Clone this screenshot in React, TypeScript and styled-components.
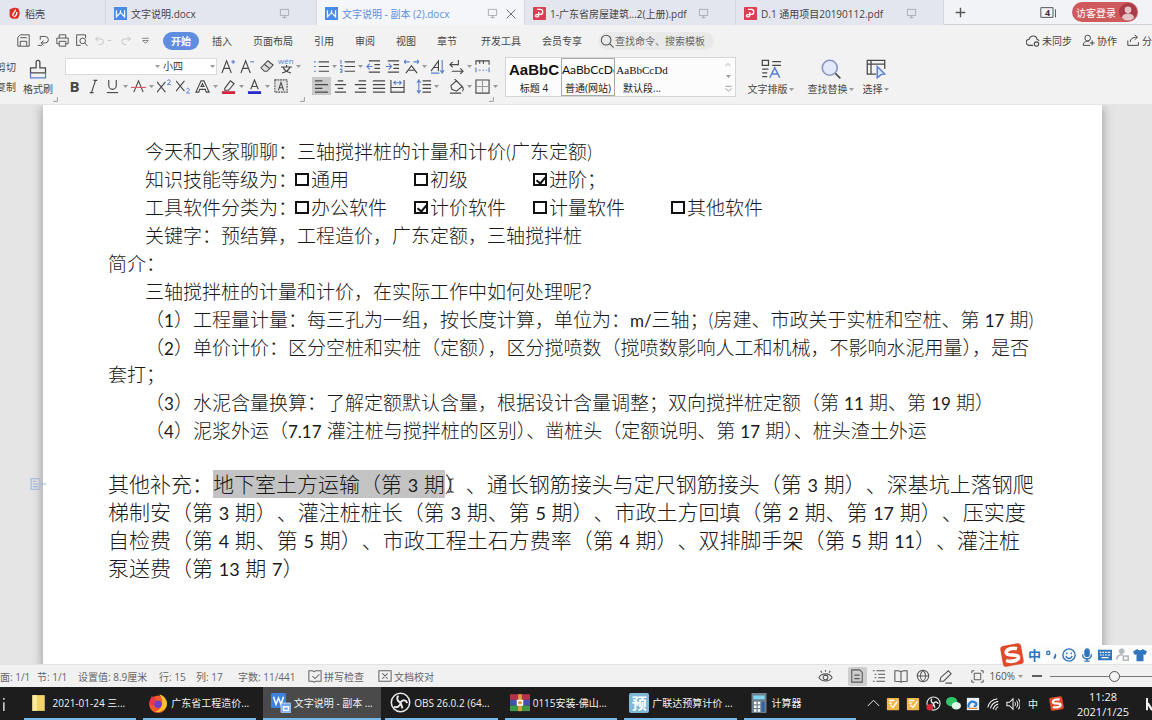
import React from "react";
import styled, { createGlobalStyle } from "styled-components";

const UI = `"Open Sans", "Noto Sans CJK SC", sans-serif`;

const Global = createGlobalStyle`
  * { box-sizing: border-box; }
  body { margin: 0; background: #f2f2f2; font-family: ${UI}; font-size: 10px; color: #484848; }
  button { font: inherit; color: inherit; background: none; border: 0; padding: 0; margin: 0; }
  svg { display: block; flex: none; }
`;

const Shell = styled.div`
  min-height: 100vh;
  display: flex;
  flex-direction: column;
  overflow: hidden;
  white-space: nowrap;
`;

/* ---------- tab strip ---------- */
const TabStrip = styled.header`
  display: flex;
  height: 25px;
  border-bottom: 1px solid #cfd1d8;
  background: #f2f3f6;
`;
const Tab = styled.button<{ $w: number; $active?: boolean }>`
  width: ${(p) => p.$w}px;
  height: 25px;
  display: flex;
  align-items: center;
  gap: 4px;
  padding: 2px 8px 0;
  border-right: 1px solid #d6d8e0;
  background: ${(p) => (p.$active ? "#f5f6fa" : "#e4e6ef")};
  color: ${(p) => (p.$active ? "#5b8de0" : "#444")};
`;
const TabTail = styled.span`
  margin-left: auto;
  display: flex;
  align-items: center;
  gap: 8px;
  padding-right: 18px;
`;
const TabTailTight = styled(TabTail)`
  padding-right: 0;
`;
const NewTab = styled.button`
  width: 32px;
  display: grid;
  place-items: center;
`;
const StripRight = styled.div`
  margin-left: auto;
  display: flex;
  align-items: center;
  gap: 14px;
  padding-right: 14px;
`;
const Login = styled.button`
  display: flex;
  align-items: center;
  justify-content: space-between;
  width: 66px;
  height: 20px;
  padding: 0 1px 0 4px;
  border-radius: 10px;
  background: #cf5a5c;
  color: #fff;
`;

/* ---------- menu ---------- */
const MenuRow = styled.nav`
  display: flex;
  align-items: center;
  height: 31px;
  padding-right: 2px;
`;
const QuickTools = styled.div`
  display: flex;
  align-items: center;
  padding-left: 13px;
  width: 163px;
`;
const Quick = styled.button<{ $dim?: boolean; $w?: number }>`
  width: ${(p) => p.$w ?? 20}px;
  height: 18px;
  display: grid;
  place-items: center;
  color: ${(p) => (p.$dim ? "#c2c2c2" : "#555")};
`;
const MenuGroup = styled.div<{ $gap: number; $after: number }>`
  display: flex;
  align-items: center;
  gap: ${(p) => p.$gap}px;
  margin-right: ${(p) => p.$after}px;
`;
const MenuItem = styled.button`
  height: 18px;
`;
const ActiveItem = styled(MenuItem)`
  width: 36px;
  margin-right: -8px;
  border-radius: 9px;
  background: #5f8ee0;
  color: #fff;
  font-weight: 700;
`;
const Search = styled.label`
  display: flex;
  align-items: center;
  gap: 1px;
  width: 116px;
  height: 18px;
  padding-left: 2px;
  border-radius: 9px;
  background: #e9e9ea;
  color: #555;
`;
const SearchInput = styled.input`
  flex: 1;
  min-width: 0;
  padding: 0;
  border: 0;
  outline: 0;
  background: none;
  font: inherit;
  &::placeholder { color: #666; opacity: 1; }
`;
const MenuRight = styled.div`
  margin-left: auto;
  display: flex;
  gap: 10px;
  margin-right: -12px;
`;
const IconText = styled.button`
  display: flex;
  align-items: center;
  gap: 2px;
`;

/* ---------- ribbon ---------- */
const Ribbon = styled.section`
  display: flex;
  height: 49px;
  border-bottom: 1px solid #e4e4e4;
`;
const Clipboard = styled.div`
  display: flex;
  flex-wrap: wrap;
  align-content: flex-start;
  width: 65px;
`;
const CutCopy = styled.div`
  width: 16px;
  height: 40px;
  display: flex;
  flex-direction: column;
  align-items: flex-end;
  overflow: hidden;
  button { height: 20px; }
`;
const Rows = styled.div<{ $w: number }>`
  width: ${(p) => p.$w}px;
`;
const Row = styled.div`
  display: flex;
  align-items: center;
  height: 20px;
`;
const LauncherRow = styled.div`
  width: 100%;
  display: flex;
  justify-content: flex-end;
  padding: 1px 7px 0 0;
  color: #999;
`;
const Cell = styled.button<{ $on?: boolean }>`
  display: flex;
  align-items: center;
  height: 18px;
  background: ${(p) => (p.$on ? "#c9c9c9" : "none")};
`;
const CellIcon = styled.span`
  width: 19px;
  display: grid;
  place-items: center;
`;
const CaretBox = styled.span`
  width: 7px;
  display: grid;
  place-items: center;
`;
const Spacer = styled.span<{ $w: number }>`
  width: ${(p) => p.$w}px;
`;
const Combo = styled.div`
  display: flex;
  width: 152px;
  height: 17px;
  border: 1px solid #dadada;
  background: #fff;
`;
const ComboSelect = styled.select<{ $w: number }>`
  appearance: none;
  width: ${(p) => p.$w}px;
  border: 0;
  padding: 0 2px;
  background: none;
  font: inherit;
  color: #333;
`;
const BoldGlyph = styled.b`
  font-size: 15px;
  line-height: 14px;
`;
const Gallery = styled.div`
  display: flex;
  width: 231px;
  height: 40px;
  margin: 1px 0 0 4px;
  padding: 0 1px;
  border: 1px solid #d6d6d6;
  background: #fcfcfc;
`;
const StyleCard = styled.button<{ $on?: boolean }>`
  width: 54px;
  overflow: hidden;
  border: 1px solid ${(p) => (p.$on ? "#a8a8a8" : "transparent")};
  color: #222;
  display: flex;
  flex-direction: column;
`;
const Sample = styled.span<{ $font: string; $size: number; $bold?: boolean }>`
  height: 22px;
  line-height: 22px;
  font-family: ${(p) => p.$font};
  font-size: ${(p) => p.$size}px;
  font-weight: ${(p) => (p.$bold ? 700 : 400)};
  color: #111;
`;
const CardName = styled.span`
  width: 100%;
  line-height: 14px;
  text-align: center;
`;
const GalleryScroll = styled.div`
  margin-left: auto;
  width: 12px;
  display: flex;
  flex-direction: column;
  align-items: center;
  justify-content: space-around;
`;
const BigButton = styled.button<{ $w: number }>`
  width: ${(p) => p.$w}px;
  height: 40px;
  display: flex;
  flex-direction: column;
  align-items: center;
  justify-content: space-between;
  padding-top: 3px;
  line-height: 14px;
`;
const BigTools = styled.div`
  display: flex;
  padding: 0 5px;
`;
const LabelRow = styled.span`
  display: flex;
  align-items: center;
`;

/* ---------- document ---------- */
const Desk = styled.main`
  flex: 1;
  display: flex;
  padding: 0 50px 0 43px;
  background: #e5e5e6;
`;
const Page = styled.article`
  position: relative;
  flex: 1;
  min-width: 0;
  padding: 33px 36px 0 65px;
  background: #fff;
  box-shadow: 0 4px 9px 2px #a9a9a9;
  clip-path: inset(0 -24px 0 -24px);
  color: #1a1a1a;
  font-family: Lato, "Noto Sans CJK SC", sans-serif;
  font-size: 19px;
  font-weight: 300;
`;
const Para = styled.p<{ $indent?: boolean }>`
  margin: 0 0 1px;
  line-height: 27px;
  padding-left: ${(p) => (p.$indent ? 37 : 0)}px;
`;
const Item = styled.p`
  margin: 0 0 1px;
  line-height: 27px;
  text-indent: 37px;
`;
const Extra = styled.p`
  margin: 26px 0 0;
  font-size: 21px;
  line-height: 28px;
  text-spacing-trim: space-all;
`;
const Latin = styled.span<{ $big?: boolean }>`
  font-size: ${(p) => (p.$big ? 18 : 17)}px;
  font-weight: 400;
  line-height: 1;
`;
const Selected = styled.mark`
  display: inline-block;
  background: #c3c3c3;
  color: inherit;
`;
const Choices = styled.fieldset`
  display: grid;
  grid-template-columns: 149px 119px 119px 138px auto;
  justify-content: start;
  margin: 0 0 1px;
  padding: 0 0 0 37px;
  border: 0;
  line-height: 27px;
`;
const Choice = styled.label`
  display: flex;
  align-items: center;
  gap: 2px;
  padding-left: 1px;
`;
const Tick = styled.input`
  appearance: none;
  position: relative;
  width: 14px;
  height: 13px;
  margin: 0;
  border: 2px solid #111;
  &:checked::after {
    content: "";
    position: absolute;
    left: 3px;
    top: 0;
    width: 4px;
    height: 7px;
    border: solid #111;
    border-width: 0 2px 2px 0;
    transform: rotate(40deg);
  }
`;
const MarginMark = styled.span`
  position: absolute;
  left: -18px;
  top: 372px;
`;
const IBeam = styled.span`
  position: absolute;
  left: 404px;
  top: 373px;
`;

/* ---------- status bar ---------- */
const Status = styled.footer`
  display: flex;
  align-items: center;
  height: 23px;
  overflow: hidden;
  background: #f1f1f1;
  border-top: 1px solid #e2e2e2;
  color: #666;
`;
const StatusText = styled.span<{ $w: number }>`
  width: ${(p) => p.$w}px;
`;
const StatusButton = styled(IconText)`
  width: 70px;
`;
const StatusRight = styled.div`
  margin-left: auto;
  display: flex;
  align-items: center;
  color: #555;
`;
const ViewButton = styled.button<{ $on?: boolean }>`
  width: 19px;
  height: 19px;
  margin-right: 3px;
  display: grid;
  place-items: center;
  border-radius: 2px;
  background: ${(p) => (p.$on ? "#cdcdcd" : "none")};
`;
const Zoom = styled.input`
  appearance: none;
  width: 128px;
  height: 12px;
  margin: 0 -26px 0 8px;
  background: linear-gradient(#777, #777) center / 100% 1px no-repeat;
  &::-webkit-slider-thumb {
    appearance: none;
    width: 11px;
    height: 11px;
    border: 1px solid #555;
    border-radius: 50%;
    background: #f4f4f4;
  }
`;

/* ---------- input method bar ---------- */
const Ime = styled.aside`
  position: absolute;
  right: 0;
  bottom: 23px;
  display: flex;
  align-items: center;
  gap: 4px;
  width: 152px;
  height: 19px;
  background: #fcfcfd;
  color: #2f74bd;
`;
const ImeMode = styled.b`
  font-size: 13px;
  line-height: 18px;
`;
const Anchor = styled.div`
  position: relative;
  display: flex;
  flex-direction: column;
  flex: 1;
`;

/* ---------- taskbar ---------- */
const Taskbar = styled.footer`
  display: flex;
  height: 33px;
  overflow: hidden;
  background: #1d1d1d;
  color: #f2f2f2;
`;
const TaskEdge = styled.span`
  width: 24px;
  display: flex;
  align-items: center;
  padding-left: 3px;
`;
const Task = styled.button<{ $on?: boolean }>`
  width: ${(p) => (p.$on ? 119 : 113)}px;
  margin-right: ${(p) => (p.$on ? 4 : 7)}px;
  display: flex;
  align-items: center;
  gap: 3px;
  padding-left: ${(p) => (p.$on ? 8 : 5)}px;
  border-bottom: 2px solid #76b9ed;
  background: ${(p) => (p.$on ? "#4a4a4a" : "none")};
`;
const Tray = styled.div`
  margin-left: auto;
  display: flex;
  align-items: center;
`;
const TrayIcon = styled.button`
  width: 20px;
  display: grid;
  place-items: center;
`;
const Clock = styled.time`
  width: 74px;
  text-align: center;
  font-size: 11px;
  line-height: 15px;
`;
const Badge = styled.span`
  display: grid;
  place-items: center;
  width: 20px;
  height: 20px;
  border-radius: 2px;
  background: #7fb9d6;
  color: #fff;
  font-size: 15px;
  font-weight: 700;
  line-height: 18px;
`;

/* ---------- drawings ---------- */
type IcoProps = { s?: number; w?: number; children: React.ReactNode; sw?: number };
const Ico = ({ s = 15, w, children, sw = 1.2 }: IcoProps) => (
  <svg width={w ?? s} height={s} viewBox={`0 0 ${w ? (16 * w) / s : 16} 16`} fill="none" stroke="currentColor" strokeWidth={sw} aria-hidden="true">
    {children}
  </svg>
);
const BLUE = "#5b7fd0";
const Caret = () => (
  <svg width="5" height="3" viewBox="0 0 5 3" aria-hidden="true"><path d="M0 0h5L2.500 3z" fill="#999" /></svg>
);
const Launcher = () => (
  <LauncherRow><Ico s={5}><path d="M14 0v14H0" strokeWidth="3" /></Ico></LauncherRow>
);
const Writer = () => (
  <Ico s={13}><rect width="16" height="16" fill="#4a8ae8" stroke="none" /><path d="M3 4v8l5-5 5 5V4M8 4v3" stroke="#fff" strokeWidth="1.5" /></Ico>
);
const Pdf = () => (
  <Ico s={13}><rect width="16" height="16" rx="1" fill="#dc3f55" stroke="none" /><path d="M5 3h4a3 3 0 0 1 0 6H7c-3 0-4 1-4 2s3 2 4 0V6" stroke="#fff" strokeWidth="1.6" /></Ico>
);
const Monitor = () => (
  <Ico s={11}><path d="M2 2h12v9H2zM8 11v4M5 14h6" stroke="#aaacb4" strokeWidth="1.4" /></Ico>
);
const SogouS = ({ s }: { s: number }) => (
  <Ico s={s}>
    <g transform="rotate(-10 8 8)">
      <rect x="1" y="1" width="14" height="14" rx="2" fill="#df4b2b" stroke="none" />
      <path d="M12 4.500C9 3 4.500 3.500 4.500 6S12 7.500 12 10s-5 2.800-8.500 1" stroke="#fff" strokeWidth="2.400" />
    </g>
  </Ico>
);
const Obs = ({ s, dot }: { s: number; dot?: boolean }) => (
  <Ico s={s}>
    <circle cx="8" cy="8" r="7" fill="#181818" stroke="#e8e8e8" />
    <path d="M8 8C5 7 5 4 6.500 3M8 8c1.500-2.500 4.500-2 5 .5M8 8c0 3-3 4.500-5 3M8 8l1.500 4.500" stroke="#e8e8e8" strokeWidth="1.500" />
    {dot && <circle cx="4" cy="12" r="3.500" fill="#d62a35" stroke="none" />}
  </Ico>
);
const YellowNote = () => (
  <Ico s={14}><rect x="1" y="1" width="14" height="14" rx="1" fill="#efb84a" stroke="none" /><path d="M3.500 4h6M3.500 7h3M5 9l3 3 5-7" stroke="#fff" strokeWidth="1.600" /></Ico>
);

const lines = (xs: [number, number, number][], stroke?: string) => (
  <path d={xs.map(([x, y, l]) => `M${x} ${y}h${l}`).join("")} stroke={stroke} />
);

const Tool = ({ name, caret, on, children }: { name: string; caret?: boolean; on?: boolean; children: React.ReactNode }) => (
  <Cell $on={on} aria-label={name}>
    <CellIcon>{children}</CellIcon>
    {caret && <CaretBox><Caret /></CaretBox>}
  </Cell>
);

/* Sets digits and Latin runs slightly smaller than the Chinese around them. */
const Mixed = ({ t, big }: { t: string; big?: boolean }) => (
  <>
    {t.split(/([0-9a-z./]+)/).map((part, i) => (i % 2 ? <Latin key={i} $big={big}>{part}</Latin> : part))}
  </>
);

const Option = ({ label, checked }: { label: string; checked?: boolean }) => (
  <Choice><Tick type="checkbox" defaultChecked={checked} />{label}</Choice>
);

function ImeBar() {
  return (
    <Ime aria-label="输入法工具栏">
      <SogouS s={24} />
      <ImeMode>中</ImeMode>
      <Ico s={13}><circle cx="4" cy="6" r="2" strokeWidth="1.600" /><path d="M12 8c1 0 1 3-1 5" strokeWidth="2.500" /></Ico>
      <Ico s={14}><circle cx="8" cy="8" r="7" strokeWidth="1.600" /><path d="M4.500 9c1 4 6 4 7 0M5.500 5v2M10.500 5v2" strokeWidth="1.500" /></Ico>
      <Ico s={14}><rect x="5.500" y="1" width="5" height="9" rx="2.500" fill="currentColor" /><path d="M3 7c0 7 10 7 10 0M8 12v3M5 15h6" strokeWidth="1.500" /></Ico>
      <Ico s={14}><path d="M0 2h16v12H0z" fill="currentColor" stroke="none" /><path d="M2 5h2M5 5h2M8 5h2M11 5h3M2 8h2M5 8h2M8 8h2M11 8h3M4 11h8" stroke="#fff" /></Ico>
      <Ico s={13}><g stroke="#b4b8c0"><circle cx="7" cy="4" r="3" fill="#b4b8c0" /><path d="M1 14c0-6 6-6 7-5M9 10h6v5H9z" strokeWidth="2" /></g></Ico>
      <Ico s={14}><path d="M5 1L0 4l2 4 2-1v8h8V7l2 1 2-4-5-3c-1 2-5 2-6 0z" fill="currentColor" stroke="none" /></Ico>
    </Ime>
  );
}

export default function App() {
  return (
    <Shell>
      <Global />
      <TabStrip>
        <Tab $w={106}>
          <Ico s={13}><path d="M2 3c4-2 8-3 11-1 2 4 2 8-1 12-4 1-7 1-10-2z" fill="#dc2f22" stroke="none" /><path d="M9 3c1 3-4 4-3 8M11 6c0 3-1 5-4 6" stroke="#fff" strokeWidth="1.600" /></Ico>
          稻壳
        </Tab>
        <Tab $w={211}><Writer />文字说明.docx<TabTail><Monitor /></TabTail></Tab>
        <Tab $w={208} $active>
          <Writer />文字说明 - 副本 (2).docx
          <TabTailTight><Monitor /><Ico s={10}><path d="M1 1l14 14M15 1L1 15" stroke="#666" strokeWidth="1.500" /></Ico></TabTailTight>
        </Tab>
        <Tab $w={211}><Pdf />1-广东省房屋建筑...2(上册).pdf<TabTail><Monitor /></TabTail></Tab>
        <Tab $w={208}><Pdf />D.1 通用项目20190112.pdf<TabTail><Monitor /></TabTail></Tab>
        <NewTab aria-label="新建"><Ico s={11}><path d="M8 1v14M1 8h14" stroke="#555" strokeWidth="2" /></Ico></NewTab>
        <StripRight>
          <Ico s={13} w={18}><path d="M1 2h15v12H1zM19 4v10" stroke="#555" /><text x="6" y="12" fontSize="11" fontWeight="700" fill="#333" stroke="none">4</text></Ico>
          <Login>访客登录<Ico s={18}><circle cx="8" cy="8" r="8" fill="#a83c48" stroke="none" /><circle cx="8" cy="6" r="3" fill="#e6c3c6" stroke="none" /><path d="M2.500 13c1-5 10-5 11 0-3 3.500-8 3.500-11 0z" fill="#e6c3c6" stroke="none" /></Ico></Login>
        </StripRight>
      </TabStrip>

      <MenuRow>
        <QuickTools>
          <Quick aria-label="保存"><Ico s={13}><path d="M1 15V4l3-3h11v14zM4 15V9h8v6M4 4.500h8" /></Ico></Quick>
          <Quick aria-label="导出"><Ico s={13}><path d="M4 3h6a4 4 0 0 1 0 8H5M4 3v4M8 8l-3 3 3 3M1 14h5" /></Ico></Quick>
          <Quick aria-label="打印" $w={18}><Ico s={13}><path d="M4 5V1h8v4M4 12H1V5h14v7h-3M4 9h8v6H4z" /></Ico></Quick>
          <Quick aria-label="预览"><Ico s={13}><path d="M7 14H2V1h11v4" /><circle cx="9.500" cy="8.500" r="3.500" /><path d="M12 11l3.500 4" /></Ico></Quick>
          <Quick aria-label="撤销" $dim $w={24}><Ico s={13} w={18}><path d="M5 3L2 6l3 3M2 6h6a3.500 3.500 0 0 1 0 7H6M17 8h4" /></Ico></Quick>
          <Quick aria-label="恢复" $dim><Ico s={13}><path d="M11 3l3 3-3 3M14 6H7a3.500 3.500 0 0 0 0 7h2" /></Ico></Quick>
          <Quick aria-label="更多"><Ico s={9}><path d="M2 4h12M3 8l5 5 5-5z" /></Ico></Quick>
        </QuickTools>
        <MenuGroup $gap={21} $after={24}>
          <ActiveItem>开始</ActiveItem>
          {["插入", "页面布局", "引用", "审阅", "视图", "章节"].map((m) => <MenuItem key={m}>{m}</MenuItem>)}
        </MenuGroup>
        <MenuGroup $gap={21} $after={16}>
          <MenuItem>开发工具</MenuItem>
          <MenuItem>会员专享</MenuItem>
        </MenuGroup>
        <Search>
          <Ico s={14}><circle cx="7" cy="7" r="5.500" /><path d="M11 11l4.500 4.500" /></Ico>
          <SearchInput aria-label="查找命令" placeholder="查找命令、搜索模板" />
        </Search>
        <MenuRight>
          <IconText><Ico s={14}><path d="M8 13H4a3.500 3.500 0 0 1-.5-7C5 1 12 1 12.500 6A3.500 3.500 0 0 1 15 8" /><circle cx="12" cy="11.500" r="2.500" /></Ico>未同步</IconText>
          <IconText><Ico s={13}><circle cx="7" cy="5" r="3.500" /><path d="M1.500 14c0-5 5-5.500 7-4.500M1.500 14H10M12.500 8v6M9.500 11h6" /></Ico>协作</IconText>
          <IconText><Ico s={13}><path d="M1 8v6h13v-4M4 10c0-4 3-6 8-6M9.500 1l3.500 3-3.500 3" /></Ico>分享</IconText>
        </MenuRight>
      </MenuRow>

      <Ribbon>
        <Clipboard>
          <CutCopy><button>剪切</button><button>复制</button></CutCopy>
          <BigButton $w={44}>
            <Ico s={20}><path d="M6.500 7V2.500a1.500 1.500 0 0 1 3 0V7H14v4H2V7z" strokeWidth="1" /><path d="M2 11v4h12v-4" stroke={BLUE} strokeWidth="1" /></Ico>
            格式刷
          </BigButton>
          <Launcher />
        </Clipboard>
        <Rows $w={247}>
          <Row>
            <Combo>
              <ComboSelect $w={88} aria-label="字体"><option> </option></ComboSelect>
              <CaretBox><Caret /></CaretBox>
              <ComboSelect $w={48} aria-label="字号"><option>小四</option></ComboSelect>
              <CaretBox><Caret /></CaretBox>
            </Combo>
            <Spacer $w={2} />
            <Tool name="增大字号"><Ico><path d="M1 15L6 2l5 13M3 10h6" /><path d="M11 3h4M13 1v4" stroke={BLUE} /></Ico></Tool>
            <Tool name="减小字号"><Ico><path d="M1 15L6 2l5 13M3 10h6" /><path d="M11 3h4" stroke={BLUE} /></Ico></Tool>
            <Tool name="清除格式"><Ico s={14}><path d="M1 10l8-8 6 5-7 7H5z" fill="#dcdcdc" /><path d="M5 6l6 5" /></Ico></Tool>
            <Tool name="拼音" caret><Ico s={16}><text x="0" y="6" fontSize="8" fill={BLUE} stroke="none">wén</text><path d="M3 9h11M8.500 7v2M5 9c1 3 4 5 8 6M12 9c-1 3-4 5-8 6" /></Ico></Tool>
          </Row>
          <Row>
            <Tool name="加粗"><BoldGlyph>B</BoldGlyph></Tool>
            <Tool name="倾斜"><Ico><path d="M6 14L10 2M4 14.500h4M8 1.500h4" /></Ico></Tool>
            <Tool name="下划线" caret><Ico><path d="M4 1v6a4 4 0 0 0 8 0V1" /><path d="M2 14.500h12" /></Ico></Tool>
            <Tool name="删除线" caret><Ico><path d="M3 14L8 2l5 12" /><path d="M0 9h16" stroke="#e0566a" /></Ico></Tool>
            <Tool name="上标"><Ico><path d="M0 3l9 11M9 3L0 14" /><path d="M11 2c1-2 4-1 3 1l-3 3h4" stroke={BLUE} strokeWidth="1" /></Ico></Tool>
            <Tool name="下标"><Ico><path d="M0 2l9 11M9 2L0 13" /><path d="M11 11c1-2 4-1 3 1l-3 3h4" stroke={BLUE} strokeWidth="1" /></Ico></Tool>
            <Tool name="文字效果" caret><Ico><path d="M1 14L6.500 2h3L15 14h-3l-1-3H5l-1 3zM6.500 8h3L8 5z" /></Ico></Tool>
            <Tool name="突出显示" caret><Ico><path d="M4 10l6-8 4 3-6 7H4z" /><path d="M1 14.500h14" stroke="#d8203c" strokeWidth="3" /></Ico></Tool>
            <Tool name="字体颜色" caret><Ico><path d="M4 11L8 1l4 10M5.500 8h5" /><path d="M1 14.500h14" stroke="#2a2ac8" strokeWidth="3" /></Ico></Tool>
            <Tool name="字符底纹"><Ico s={14}><path d="M1 1h14v14H1z" fill="#e4e4e4" strokeDasharray="2 1" /><path d="M5 13L8 4l3 9M6 10h4" /></Ico></Tool>
          </Row>
          <Launcher />
        </Rows>
        <Rows $w={189}>
          <Row>
            <Tool name="项目符号" caret><Ico>{lines([[5, 3, 11], [5, 8, 11], [5, 13, 11]])}{lines([[0, 3, 2], [0, 8, 2], [0, 13, 2]], BLUE)}</Ico></Tool>
            <Tool name="编号" caret><Ico>{lines([[5, 3, 11], [5, 8, 11], [5, 13, 11]])}<path d="M1 1v4M0 7h2v2M0 11h2v3H0" stroke={BLUE} /></Ico></Tool>
            <Tool name="减少缩进"><Ico>{lines([[3, 2, 12], [9, 6, 6], [9, 10, 6], [3, 14, 12]])}<path d="M7 8H1M4 5L1 8l3 3" stroke={BLUE} /></Ico></Tool>
            <Tool name="增加缩进"><Ico>{lines([[3, 2, 12], [9, 6, 6], [9, 10, 6], [3, 14, 12]])}<path d="M1 8h6M4 5l3 3-3 3" stroke={BLUE} /></Ico></Tool>
            <Tool name="中文版式" caret><Ico><path d="M2 15l6-8 6 8M5 12h6" /><path d="M0 3h6M10 3h6M2 1L0 3l2 2M14 1l2 2-2 2" stroke={BLUE} /></Ico></Tool>
            <Tool name="文字方向"><Ico><path d="M1 13L9 2v11M4 9h5" /><path d="M13 1v13M11 12l2 3 2-3M1 15h9" stroke={BLUE} /></Ico></Tool>
            <Tool name="换行" caret><Ico><path d="M10 1v5H1M4 3L1 6l3 3M3 13h12M12 10l3 3-3 3" /></Ico></Tool>
            <Tool name="制表位"><Ico><path d="M1 6V2h14v4M5 2v3M9 2v3" /><path d="M1 14V9M15 14V9M4 12h2M8 12h2M12 12h1" stroke={BLUE} /></Ico></Tool>
          </Row>
          <Row>
            <Tool name="左对齐" on><Ico>{lines([[1, 2, 8], [1, 6, 14], [1, 10, 8], [1, 14, 14]])}</Ico></Tool>
            <Tool name="居中"><Ico>{lines([[5, 2, 6], [2, 6, 12], [5, 10, 6], [2, 14, 12]])}</Ico></Tool>
            <Tool name="右对齐"><Ico>{lines([[7, 2, 8], [3, 6, 12], [7, 10, 8], [3, 14, 12]])}</Ico></Tool>
            <Tool name="两端对齐"><Ico>{lines([[2, 2, 13], [2, 6, 13], [2, 10, 13], [2, 14, 13]])}</Ico></Tool>
            <Tool name="分散对齐"><Ico><path d="M1 1v14M15 1v14M1 9h14M1 14h14" /><path d="M4 4h8M6 2L4 4l2 2M10 2l2 2-2 2" stroke={BLUE} /></Ico></Tool>
            <Spacer $w={7} />
            <Tool name="行距" caret><Ico>{lines([[7, 2, 9], [7, 6, 9], [7, 10, 9], [7, 14, 9]])}<path d="M3 1v14M1 4l2-3 2 3M1 12l2 3 2-3" stroke={BLUE} /></Ico></Tool>
            <Spacer $w={7} />
            <Tool name="底纹" caret><Ico><path d="M2 7l6-5 6 6-6 5-5-2zM8 2L6 0M14 8c2 2 1 5 0 5M1 15h12" /></Ico></Tool>
            <Tool name="边框" caret><Ico><path d="M1 1h14v14H1z" /><path d="M8 2v12M2 8h12" stroke="#999" /></Ico></Tool>
          </Row>
          <Launcher />
        </Rows>
        <Gallery>
          <StyleCard><Sample $font={`"Liberation Sans", sans-serif`} $size={15} $bold>AaBbC</Sample><CardName>标题 4</CardName></StyleCard>
          <StyleCard $on><Sample $font={`Lato, sans-serif`} $size={12}>AaBbCcDd</Sample><CardName>普通(网站)</CardName></StyleCard>
          <StyleCard><Sample $font={`"Liberation Serif", serif`} $size={11}>AaBbCcDd</Sample><CardName>默认段...</CardName></StyleCard>
          <GalleryScroll><Ico s={6}><path d="M1 11l7-7 7 7" /></Ico><Caret /><Ico s={7}><path d="M1 3h14M1 8l7 6 7-6" /></Ico></GalleryScroll>
        </Gallery>
        <BigTools>
          <BigButton $w={60}>
            <Ico s={20}><path d="M1 1h5v4H1zM9 2h7M9 5h7M1 8h5M1 11h4M1 14h4" strokeWidth="1" /><path d="M7 15l4-8 4 8M8.500 12h5" stroke={BLUE} /></Ico>
            <LabelRow>文字排版<CaretBox><Caret /></CaretBox></LabelRow>
          </BigButton>
          <BigButton $w={60}>
            <Ico s={20}><circle cx="7" cy="7" r="6" fill="#e3e8fa" stroke="#8794c4" /><path d="M11.500 11.500l4 4" /></Ico>
            <LabelRow>查找替换<CaretBox><Caret /></CaretBox></LabelRow>
          </BigButton>
          <BigButton $w={30}>
            <Ico s={20}><path d="M8 12H1V1h14v7M1 4h14M4 1v11" strokeWidth="1" /><path d="M9 6l6 6-3 .5L9 15z" fill="#dfe6fb" stroke={BLUE} /></Ico>
            <LabelRow>选择<CaretBox><Caret /></CaretBox></LabelRow>
          </BigButton>
        </BigTools>
      </Ribbon>

      <Anchor>
        <Desk>
          <Page>
            <Para $indent>今天和大家聊聊：三轴搅拌桩的计量和计价(广东定额)</Para>
            <Choices>
              <span>知识技能等级为：</span>
              <Option label="通用" />
              <Option label="初级" />
              <Option label="进阶；" checked />
            </Choices>
            <Choices>
              <span>工具软件分类为：</span>
              <Option label="办公软件" />
              <Option label="计价软件" checked />
              <Option label="计量软件" />
              <Option label="其他软件" />
            </Choices>
            <Para $indent>关键字：预结算，工程造价，广东定额，三轴搅拌桩</Para>
            <Para>简介：</Para>
            <Para $indent>三轴搅拌桩的计量和计价，在实际工作中如何处理呢？</Para>
            <Item><Mixed t="（1）工程量计量：每三孔为一组，按长度计算，单位为：m/三轴；(房建、市政关于实桩和空桩、第 17 期)" /></Item>
            <Item>
              <Mixed t="（2）单价计价：区分空桩和实桩（定额），区分搅喷数（搅喷数影响人工和机械，不影响水泥用量），是否" /><br />
              套打；
            </Item>
            <Item><Mixed t="（3）水泥含量换算：了解定额默认含量，根据设计含量调整；双向搅拌桩定额（第 11 期、第 19 期）" /></Item>
            <Item><Mixed t="（4）泥浆外运（7.17 灌注桩与搅拌桩的区别）、凿桩头（定额说明、第 17 期）、桩头渣土外运" /></Item>
            <Extra>
              其他补充：<Selected><Mixed big t="地下室土方运输（第 3 期" /></Selected>
              <Mixed big t="）、通长钢筋接头与定尺钢筋接头（第 3 期）、深基坑上落钢爬" /><br />
              <Mixed big t="梯制安（第 3 期）、灌注桩桩长（第 3 期、第 5 期）、市政土方回填（第 2 期、第 17 期）、压实度" /><br />
              <Mixed big t="自检费（第 4 期、第 5 期）、市政工程土石方费率（第 4 期）、双排脚手架（第 5 期 11）、灌注桩" /><br />
              <Mixed big t="泵送费（第 13 期 7）" />
            </Extra>
            <MarginMark><Ico s={14} w={22}><path d="M7 2h10v12H7zM9 5h3M9 8h6M9 11h6M18 8h6" stroke="#9db4dd" /></Ico></MarginMark>
            <IBeam><Ico s={15} w={8}><path d="M1 1h2l1 1 1-1h2M4 2v12M1 15h2l1-1 1 1h2" stroke="#333" /></Ico></IBeam>
          </Page>
        </Desk>
        <Status>
          <StatusText $w={37}>面: 1/1</StatusText>
          <StatusText $w={41}>节: 1/1</StatusText>
          <StatusText $w={81}>设置值: 8.9厘米</StatusText>
          <StatusText $w={37}>行: 15</StatusText>
          <StatusText $w={42}>列: 17</StatusText>
          <StatusText $w={70}>字数: 11/441</StatusText>
          <StatusButton><Ico s={14}><path d="M5 2H1v12h4l2 1 2-1h6V2H9L7 3zM5 8l3 3 5-5" /></Ico>拼写检查</StatusButton>
          <StatusButton><Ico s={14}><path d="M1 2h14v12H1zM5 5l6 6M11 5l-6 6" /></Ico>文档校对</StatusButton>
          <StatusRight>
            <ViewButton aria-label="护眼模式"><Ico><path d="M1 9c3-5 11-5 14 0-3 5-11 5-14 0zM8 1v2M3 2l1 2M13 2l-1 2" /><circle cx="8" cy="9" r="2.500" /></Ico></ViewButton>
            <Spacer $w={10} />
            <ViewButton $on aria-label="页面视图"><Ico s={14}><path d="M2 1h9l3 3v11H2zM5 7h6M5 11h6" /></Ico></ViewButton>
            <ViewButton aria-label="大纲"><Ico s={14}>{lines([[1, 2, 2], [5, 2, 10], [3, 6, 2], [7, 6, 8], [3, 10, 2], [7, 10, 8], [1, 14, 2], [5, 14, 10]])}</Ico></ViewButton>
            <ViewButton aria-label="阅读版式"><Ico s={14}><path d="M8 3C6 1.500 4 2 1 2v12c3 0 5 0 7 1 2-1 4-1 7-1V2c-3 0-5-.5-7 1zM8 3v12" /></Ico></ViewButton>
            <ViewButton aria-label="Web版式"><Ico s={14}><circle cx="8" cy="8" r="6.500" /><path d="M1.500 8h13M8 1.500c-4 4-4 9 0 13M8 1.500c4 4 4 9 0 13" /></Ico></ViewButton>
            <ViewButton aria-label="写作模式"><Ico s={15}><path d="M2 13l1-4 8-7 3 3-8 8zM8 15h7" /></Ico></ViewButton>
            <Spacer $w={10} />
            <ViewButton aria-label="最佳显示"><Ico s={13}><path d="M1 4V1h3M12 1h3v3M15 12v3h-3M4 15H1v-3M4 4h8v8H4z" /></Ico></ViewButton>
            160%<Spacer $w={3} /><Caret />
            <Spacer $w={9} /><Ico s={10}><path d="M0 8h16" strokeWidth="3" /></Ico>
            <Zoom type="range" aria-label="显示比例" defaultValue={50} />
          </StatusRight>
        </Status>
        <ImeBar />
      </Anchor>

      <Taskbar>
        <TaskEdge><Ico s={14} w={4}><path d="M1 1v2M1 6v10" strokeWidth="1.500" /></Ico></TaskEdge>
        <Task><Ico s={18}><path d="M3 1h11v14H3z" fill="#f3d46b" stroke="none" /><path d="M3 1h4v14H3z" fill="#fbe9a0" stroke="none" /></Ico>&nbsp;2021-01-24 三...</Task>
        <Task><Ico s={20}><circle cx="8" cy="9" r="7" fill="#f0582c" stroke="none" /><path d="M9 1c4 1 7 5 6 9-1 4-6 6-9 5 6-2 7-9 3-14z" fill="#fdc22e" stroke="none" /><circle cx="8" cy="9" r="3" fill="#6f3fc4" stroke="none" /><path d="M1 9C1 5 3 4 3 2c1 2 3 2 4 4-2 0-3 2-2 4z" fill="#e8364e" stroke="none" /></Ico>广东省工程造价...</Task>
        <Task $on><Ico s={20}><rect x="0" y="0" width="12" height="12" rx="1" fill="#3d82e0" stroke="none" /><path d="M2 3l2 6 2-5 2 5 2-6" stroke="#fff" /><rect x="8" y="8" width="8" height="8" rx="1" fill="#6fa4f2" stroke="#dbe8fc" strokeWidth=".6" /><path d="M10 14v-3h4v3z" stroke="#fff" /></Ico>文字说明 - 副本 ...</Task>
        <Task><Obs s={21} />OBS 26.0.2 (64...</Task>
        <Task><Ico s={20}><path d="M0 1h16v4.500H0z" fill="#b8324a" stroke="none" /><path d="M0 5.500h16V10H0z" fill="#4450b4" stroke="none" /><path d="M0 10h16v4.500H0z" fill="#3f9a48" stroke="none" /><path d="M6.500 1h3v13.500h-3z" fill="#d9a23c" stroke="none" /><path d="M6 6h4v3.500H6z" stroke="#fff" /></Ico>0115安装-佛山...</Task>
        <Task><Badge>预</Badge>广联达预算计价 ...</Task>
        <Task><Ico s={20}><rect x="2" y="0" width="12" height="16" fill="#70808c" stroke="none" /><path d="M3.500 2h9v3h-9z" fill="#7fd6ee" stroke="none" /><path d="M4 8h2M7 8h2M4 11h2M7 11h2M4 14h2M7 14h2" stroke="#fff" strokeWidth="2" /><path d="M10 7h2.500v8H10z" fill="#2f62a8" stroke="none" /></Ico>计算器</Task>
        <Tray>
          <TrayIcon aria-label="显示隐藏的图标"><Ico s={13}><path d="M1 11l7-7 7 7" /></Ico></TrayIcon>
          <TrayIcon aria-label="便签"><YellowNote /></TrayIcon>
          <TrayIcon aria-label="便签二"><YellowNote /></TrayIcon>
          <TrayIcon aria-label="OBS"><Obs s={15} dot /></TrayIcon>
          <TrayIcon aria-label="微信"><Ico s={15}><ellipse cx="6" cy="6" rx="6" ry="5" fill="#2fc866" stroke="none" /><ellipse cx="11" cy="10.500" rx="5" ry="4" fill="#dff5e6" stroke="none" /></Ico></TrayIcon>
          <TrayIcon aria-label="云盘"><Ico s={14}><rect x="1" y="1" width="14" height="14" fill="#e8f1fb" stroke="none" /><path d="M3 12c-1-5 3-8 7-6 3 1 2 5-1 4" stroke="#2f7fd0" strokeWidth="2.500" /><path d="M3 13h10" stroke="#e6843a" strokeWidth="1.500" /></Ico></TrayIcon>
          <TrayIcon aria-label="网络"><Ico s={14}><path d="M2 12C3 7 7 3 13 2M5 13c1-4 4-7 9-8M8 14c1-3 3-5 6-6M11 15c0-2 1-3 3-4" /></Ico></TrayIcon>
          <TrayIcon aria-label="音量"><Ico s={14}><path d="M1 6h3l4-4v12l-4-4H1zM10 6c1 1 1 3 0 4M12 4c2 2 2 6 0 8M14 2c3 3 3 9 0 12" /></Ico></TrayIcon>
          <TrayIcon aria-label="输入法">中</TrayIcon>
          <Spacer $w={3} />
          <TrayIcon aria-label="搜狗"><SogouS s={15} /></TrayIcon>
          <Clock>11:28<br />2021/1/25</Clock>
          <Spacer $w={6} />
          <Ico s={14} w={6}><path d="M1 1v14M2 7l5 8" strokeWidth="2.500" /></Ico>
        </Tray>
      </Taskbar>
    </Shell>
  );
}
